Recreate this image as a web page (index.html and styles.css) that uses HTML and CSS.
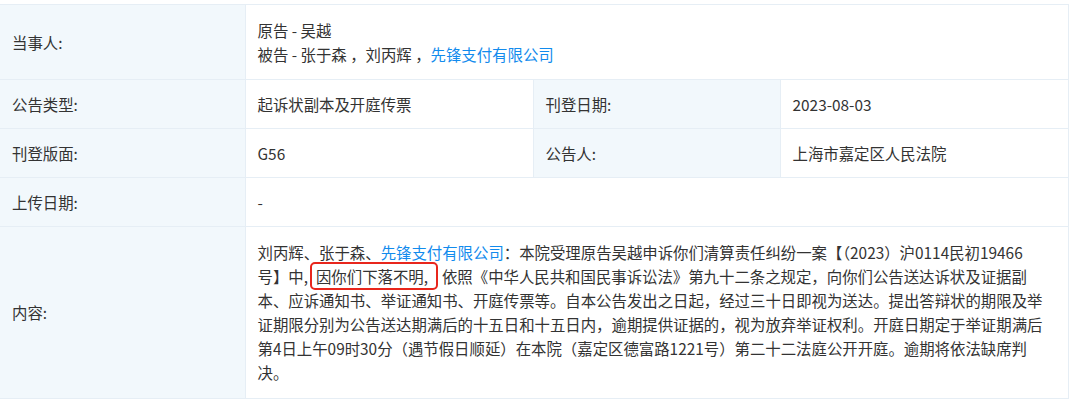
FILE: index.html
```html
<!DOCTYPE html>
<html>
<head>
    <meta charset="utf-8">
    <title>开庭公告详情</title>
    <link rel="stylesheet" href="styles.css">
</head>
<body>

    <table class="detail-table">
        <colgroup>
            <col class="col-label">
            <col class="col-value">
            <col class="col-label2">
            <col class="col-value2">
        </colgroup>
        <tr class="row-party">
            <td class="tb">当事人:</td>
            <td colspan="3">
                原告 - 吴越<br>
                被告 - 张于森 ，刘丙辉 ，<span class="link">先锋支付有限公司</span>
            </td>
        </tr>
        <tr>
            <td class="tb">公告类型:</td>
            <td>起诉状副本及开庭传票</td>
            <td class="tb">刊登日期:</td>
            <td>2023-08-03</td>
        </tr>
        <tr>
            <td class="tb">刊登版面:</td>
            <td>G56</td>
            <td class="tb">公告人:</td>
            <td>上海市嘉定区人民法院</td>
        </tr>
        <tr>
            <td class="tb">上传日期:</td>
            <td colspan="3">-</td>
        </tr>
        <tr class="row-content">
            <td class="tb">内容:</td>
            <td colspan="3">
                <div class="content-line">刘丙辉、张于森、<span class="link">先锋支付有限公司</span>：本院受理原告吴越申诉你们清算责任纠纷一案【（2023）沪0114民初19466</div>
                <div class="content-line">号】中,<span class="mark">因你们下落不明,</span>依照《中华人民共和国民事诉讼法》第九十二条之规定，向你们公告送达诉状及证据副</div>
                <div class="content-line">本、应诉通知书、举证通知书、开庭传票等。自本公告发出之日起，经过三十日即视为送达。提出答辩状的期限及举</div>
                <div class="content-line">证期限分别为公告送达期满后的十五日和十五日内，逾期提供证据的，视为放弃举证权利。开庭日期定于举证期满后</div>
                <div class="content-line">第4日上午09时30分（遇节假日顺延）在本院（嘉定区德富路1221号）第二十二法庭公开开庭。逾期将依法缺席判</div>
                <div class="content-line">决。</div>
            </td>
        </tr>
    </table>

</body>
</html>
```

FILE: styles.css
```css
html, body {
    margin: 0;
}

body {
    font-family: "Microsoft YaHei", "Noto Sans CJK SC", "Noto Sans", sans-serif;
    font-size: 15.4px;
    color: #333;
    background: #fff;
    padding-top: 4px;
}

.detail-table {
    width: 1068px;
    border-collapse: collapse;
    table-layout: fixed;
}

.col-label {
    width: 245px;
}

.col-value {
    width: 288px;
}

.col-label2 {
    width: 247px;
}

.col-value2 {
    width: 288px;
}

.detail-table td {
    border: 1px solid #e6eef5;
    padding: 12px 12px;
    line-height: 24px;
    vertical-align: middle;
    white-space: nowrap;
}

.detail-table tr td:first-child {
    border-left: none;
}

.detail-table .tb {
    background-color: #f2f8fc;
    color: #333;
}

.row-party td {
    padding-top: 13px;
    padding-bottom: 13px;
}

.row-content td {
    padding-top: 13px;
    padding-bottom: 14px;
}

.content-line {
    height: 24px;
}

.link {
    color: #128bed;
    cursor: pointer;
}

/* red highlight box drawn over the text */
.mark {
    position: relative;
    padding: 0 10px 0 6px;
    margin: 0 4px 0 2px;
}

.mark::after {
    content: "";
    position: absolute;
    left: 0;
    right: 0;
    top: -3px;
    bottom: -3px;
    border: 2px solid #e8261c;
    border-radius: 5px;
}
```
